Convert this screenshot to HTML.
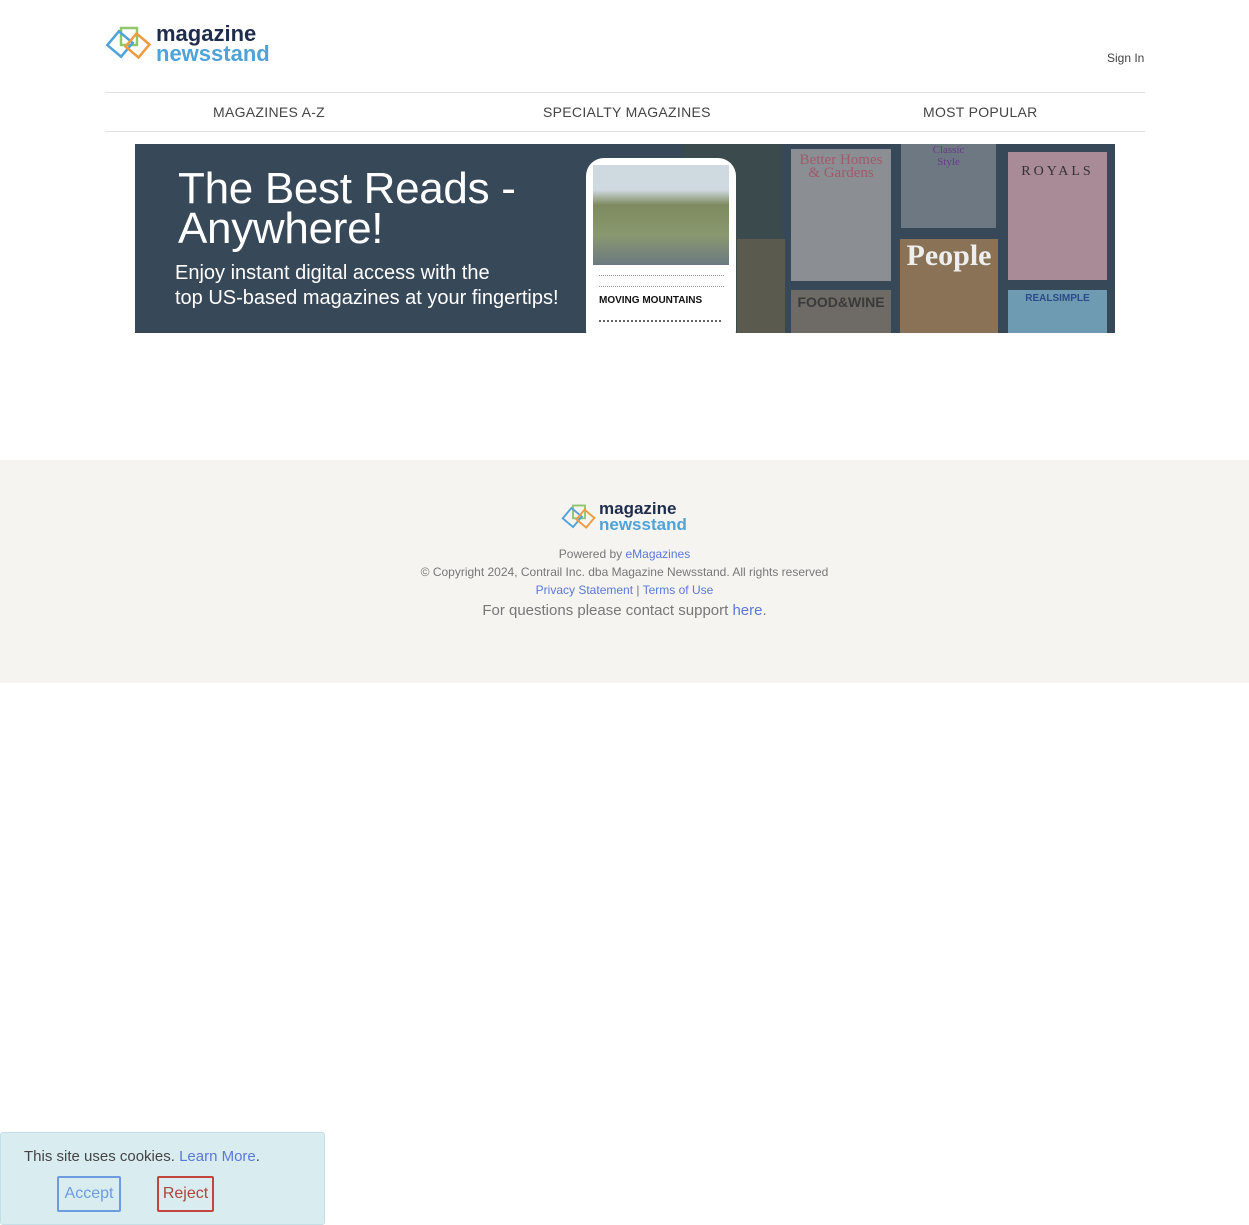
<!DOCTYPE html>
<html><head><meta charset="utf-8"><style>
*{margin:0;padding:0;box-sizing:border-box}
body{width:1249px;height:1225px;background:#fff;font-family:"Liberation Sans",sans-serif;position:relative;overflow:hidden}
.logo{position:absolute}
.logo .m{position:absolute;color:#1f2d4d;font-weight:bold}
.logo .n{position:absolute;color:#4fa3d9;font-weight:bold}
.nav{position:absolute;left:105px;top:92px;width:1040px;height:40px;border-top:1px solid #e3e3e3;border-bottom:1px solid #e3e3e3}
.nav span{position:absolute;top:11px;font-size:14px;color:#444;letter-spacing:.3px}
.banner{position:absolute;left:135px;top:144px;width:980px;height:189px;background:#374859;overflow:hidden}
.c{position:absolute;overflow:hidden;font-family:"Liberation Serif",serif;text-align:center}
.footer{position:absolute;left:0;top:460px;width:1249px;height:223px;background:#f6f4f1}
.footer p{position:absolute;width:100%;text-align:center;font-size:12px;color:#777}
a{color:#5b78d8;text-decoration:none}
.cookie{position:absolute;left:0;top:1132px;width:325px;height:93px;background:#d9ecf0;border:1px solid #c4dfe6;border-radius:3px}
</style></head><body>

<div class="logo" style="left:105px;top:22px;width:170px;height:45px">
<svg width="48" height="40" style="position:absolute;left:0;top:4px" viewBox="0 0 48 40">
<rect x="16" y="2" width="16" height="17" fill="none" stroke="#8fc66e" stroke-width="2.5"/>
<rect x="6" y="9" width="18" height="18" fill="none" stroke="#4fa3d9" stroke-width="2.5" transform="rotate(40 15 18)"/>
<rect x="24" y="11" width="17" height="17" fill="none" stroke="#ef9a3e" stroke-width="2.5" transform="rotate(40 32.5 19.5)"/>
</svg>
<div class="m" style="left:51px;top:-1px;font-size:22px">magazine</div>
<div class="n" style="left:51px;top:19px;font-size:22px">newsstand</div>
</div>
<div style="position:absolute;left:1107px;top:51px;font-size:12px;color:#444">Sign In</div>

<div class="nav">
<span style="left:108px">MAGAZINES A-Z</span>
<span style="left:438px">SPECIALTY MAGAZINES</span>
<span style="left:818px">MOST POPULAR</span>
</div>

<div class="banner">
<div style="position:absolute;left:43px;top:25px;color:#fff;font-size:44px;line-height:40px;letter-spacing:-0.3px">The Best Reads -<br>Anywhere!</div>
<div style="position:absolute;left:40px;top:117px;color:#fff;font-size:20px;line-height:25px">Enjoy instant digital access with the<br>top US-based magazines at your fingertips!</div>
<div class="c" style="left:548px;top:0;width:100px;height:189px;background:#3b4a4c"></div>
<div class="c" style="left:602px;top:95px;width:48px;height:94px;background:#5a5a4f"></div>
<div class="c" style="left:656px;top:5px;width:100px;height:132px;background:#8b8f93;color:#a05a6a;font-size:15px;line-height:13px;padding-top:5px">Better Homes<br>&amp; Gardens</div>
<div class="c" style="left:656px;top:146px;width:100px;height:43px;background:#6e6a66;color:#3a3a3a;font-family:'Liberation Sans';font-weight:bold;font-size:14px;padding-top:4px">FOOD&amp;WINE</div>
<div class="c" style="left:766px;top:0;width:95px;height:84px;background:#6d7882;color:#6a3a8a;font-size:11px">Classic<br>Style</div>
<div class="c" style="left:765px;top:95px;width:98px;height:94px;background:#8a7256;color:#eee;font-weight:bold;font-size:30px">People</div>
<div class="c" style="left:873px;top:8px;width:99px;height:128px;background:#a98a97;color:#333;font-size:14px;letter-spacing:3px;padding-top:12px">ROYALS</div>
<div class="c" style="left:873px;top:146px;width:99px;height:43px;background:#6e9bb2;color:#2d4a8a;font-family:'Liberation Sans';font-weight:bold;font-size:10px;padding-top:3px">REALSIMPLE</div>
<div style="position:absolute;left:451px;top:14px;width:150px;height:190px;background:#fff;border-radius:18px"></div>
<div style="position:absolute;left:458px;top:21px;width:136px;height:100px;background:linear-gradient(#cfd9e0 0,#cfd9e0 25%,#7e8a5e 40%,#8a9870 70%,#6a7a80 100%)"></div>
<div style="position:absolute;left:464px;top:151px;font-size:10px;font-weight:bold;color:#111">MOVING MOUNTAINS</div>
<div style="position:absolute;left:464px;top:131px;width:125px;height:12px;border-top:1px dotted #999;border-bottom:1px dotted #999"></div>
<div style="position:absolute;left:464px;top:176px;width:122px;height:13px;border-top:2px dotted #666"></div>
</div>

<div class="footer">
<div class="logo" style="left:560px;top:42px;width:130px;height:35px">
<svg width="38" height="30" style="position:absolute;left:0;top:2px" viewBox="0 0 48 40">
<rect x="16" y="2" width="16" height="17" fill="none" stroke="#8fc66e" stroke-width="2.5"/>
<rect x="6" y="9" width="18" height="18" fill="none" stroke="#4fa3d9" stroke-width="2.5" transform="rotate(40 15 18)"/>
<rect x="24" y="11" width="17" height="17" fill="none" stroke="#ef9a3e" stroke-width="2.5" transform="rotate(40 32.5 19.5)"/>
</svg>
<div class="m" style="left:39px;top:-3px;font-size:17px">magazine</div>
<div class="n" style="left:39px;top:13px;font-size:17px">newsstand</div>
</div>
<p style="top:87px">Powered by <a>eMagazines</a></p>
<p style="top:105px">© Copyright 2024, Contrail Inc. dba Magazine Newsstand. All rights reserved</p>
<p style="top:123px"><a>Privacy Statement</a> | <a>Terms of Use</a></p>
<p style="top:142px;font-size:15px">For questions please contact support <a>here</a>.</p>
</div>

<div class="cookie">
<div style="position:absolute;left:23px;top:15px;font-size:15px;color:#444">This site uses cookies. <a>Learn More</a>.</div>
<div style="position:absolute;left:56px;top:43px;width:64px;height:36px;border:2px solid #6d9be0;border-radius:2px;color:#6d9be0;font-size:16px;text-align:center;line-height:32px">Accept</div>
<div style="position:absolute;left:156px;top:43px;width:57px;height:36px;border:2px solid #c0463f;border-radius:2px;color:#b0443c;font-size:16px;text-align:center;line-height:32px">Reject</div>
</div>
</body></html>
